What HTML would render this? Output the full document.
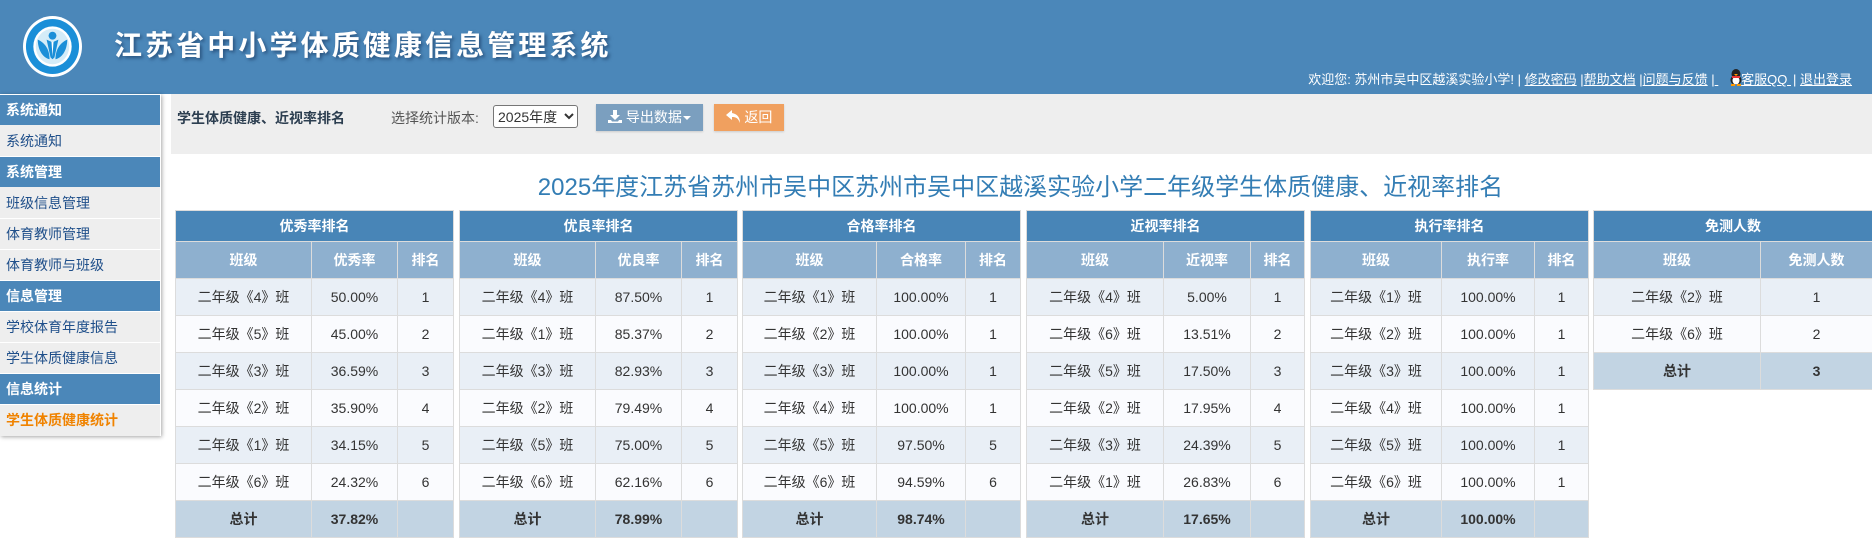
<!DOCTYPE html>
<html lang="zh-CN"><head><meta charset="utf-8"><title>学生体质健康、近视率排名</title>
<style>
*{box-sizing:border-box}
html,body{margin:0;padding:0;width:1872px;height:560px;overflow:hidden;background:#fff;font-family:"Liberation Sans","Noto Sans CJK SC",sans-serif;font-size:14px;color:#333}
#hd{position:absolute;left:0;top:0;width:1872px;height:94px;background:#4b87b9}
#logo{position:absolute;left:23px;top:16px}
#sys{position:absolute;left:114px;top:28px;font-size:28px;line-height:36px;letter-spacing:3.1px;color:#fff;font-weight:700;white-space:nowrap;text-shadow:2px 2px 3px rgba(20,50,90,.6)}
#links{position:absolute;right:20px;top:69px;color:#fff;line-height:20px;white-space:nowrap;font-size:13px}
#links u{text-decoration:underline}
#links svg{vertical-align:-2px}
#side{position:absolute;left:0;top:94px;width:161px;height:342px;background:#fff;border-top:1px solid #fff;border-right:1px solid #fff;box-shadow:1px 1px 4px rgba(0,0,0,.35)}
#side div{position:absolute;left:0;width:160px;height:31px;line-height:30px;padding-left:6px;background:#eee;color:#1f4f8a;white-space:nowrap}
#side div.h{background:#4b87b9;color:#fff;font-weight:bold;height:30px}
#side div.a{color:#f08300;font-weight:bold}
#bar{position:absolute;left:171px;top:94px;width:1701px;height:60px;background:#eee}
#bar b{position:absolute;left:6px;top:14px;line-height:20px;color:#2c3e50;white-space:nowrap}
#lab{position:absolute;left:220px;top:14px;line-height:20px;color:#555;white-space:nowrap}
select{position:absolute;left:322px;top:11px;width:85px;height:23px;font:14px "Liberation Sans","Noto Sans CJK SC",sans-serif;background:#fff;color:#333;border:1px solid #767676;border-radius:3px;padding:0}
.btn{position:absolute;top:10px;height:27px;line-height:27px;color:#fff;text-align:center;box-shadow:0 1px 2px rgba(0,0,0,.15);white-space:nowrap}
#t{position:absolute;left:172px;width:1697px;top:172px;text-align:center;font-size:24px;line-height:32px;color:#337db4;white-space:nowrap}
table{position:absolute;top:210px;table-layout:fixed;border-collapse:collapse;text-align:center;font-size:14px;color:#333}
td,th{border:1px solid #dcdcdc;padding:0}
tr{height:37px}
tr.a{height:31px}
tr.a th{background:#4885b7;color:#fff}
tr.b th{background:#8eb0cf;color:#fff}
tr.o td{background:#e9eff6}
tr.e td{background:#fafbfe}
tr.s td{background:#c2d4e3;font-weight:bold}
</style></head><body>
<div id="hd">
<svg id="logo" width="59" height="61" viewBox="0 0 60 62">
<ellipse cx="30" cy="31" rx="30" ry="31" fill="#fff"/>
<ellipse cx="30" cy="31" rx="27" ry="28" fill="#1b8fd8"/>
<ellipse cx="30" cy="31" rx="19.500" ry="20.500" fill="#fff"/>
<ellipse cx="30" cy="31" rx="17" ry="18" fill="#d4ecf8"/>
<circle cx="30" cy="20" r="4" fill="#1b8fd8"/>
<path d="M24 24L28.500 26L30 28L31.500 26L36 24L32 42L30 44L28 42Z" fill="#1b8fd8"/>
<path d="M29 26.500L30 41L31 26.500Z" fill="#fff"/>
<path d="M15 24C15 33 19 42 27 44C27 36 24 28 15 24Z" fill="#1b8fd8"/>
<path d="M45 24C45 33 41 42 33 44C33 36 36 28 45 24Z" fill="#1b8fd8"/>
</svg>
<div id="sys">江苏省中小学体质健康信息管理系统</div>
<div id="links">欢迎您: 苏州市吴中区越溪实验小学! | <u>修改密码</u> |<u>帮助文档</u> |<u>问题与反馈</u> |<u>&nbsp;</u> &nbsp;&nbsp;<svg width="14" height="17" viewBox="0 0 14 17"><ellipse cx="7" cy="5" rx="4.500" ry="5" fill="#222"/><ellipse cx="7" cy="11" rx="5.500" ry="5" fill="#222"/><ellipse cx="7" cy="11.500" rx="3.500" ry="4" fill="#fff"/><rect x="3" y="7" width="8" height="2" fill="#e33"/><path d="M5 5h4l-2 2z" fill="#f90"/><rect x="2" y="15" width="4" height="2" fill="#f90"/><rect x="8" y="15" width="4" height="2" fill="#f90"/></svg><u style="position:relative;left:-2px">客服QQ </u>| <u>退出登录</u></div>
</div>
<div id="side">
<div class="h" style="top:0">系统通知</div>
<div style="top:30px;line-height:32px">系统通知</div>
<div class="h" style="top:62px">系统管理</div>
<div style="top:92px;line-height:32px">班级信息管理</div>
<div style="top:124px;height:30px">体育教师管理</div>
<div style="top:155px;height:30px">体育教师与班级</div>
<div class="h" style="top:186px">信息管理</div>
<div style="top:217px;height:30px">学校体育年度报告</div>
<div style="top:248px;height:30px">学生体质健康信息</div>
<div class="h" style="top:279px">信息统计</div>
<div class="a" style="top:310px">学生体质健康统计</div>
</div>
<div id="bar">
<b>学生体质健康、近视率排名</b>
<span id="lab">选择统计版本:</span>
<select><option>2025年度</option></select>
<div class="btn" style="left:425px;width:107px;background:#7b9fbf"><svg width="14" height="13" viewBox="0 0 14 13" style="vertical-align:-1px"><path d="M5 0h4v5h3L7 10 2 5h3zM0 10h3l1 1.500h6l1-1.500h3v3H0z" fill="#fff"/></svg> 导出数据<span style="display:inline-block;border:4px solid transparent;border-top-color:#fff;border-bottom:0;vertical-align:2px;margin-left:1px"></span></div>
<div class="btn" style="left:543px;width:70px;background:#f0a05f"><svg width="15" height="13" viewBox="0 0 15 13" style="vertical-align:-1px"><path d="M6 0L0 5l6 5V7c4 0 6 1 8 6 0-6-3-9-8-10z" fill="#fff"/></svg> 返回</div>
</div>
<div id="t">2025年度江苏省苏州市吴中区苏州市吴中区越溪实验小学二年级学生体质健康、近视率排名</div>

<table style="left:175px;width:278px"><colgroup><col style="width:136px"><col style="width:86px"><col style="width:56px"></colgroup>
<tr class="a"><th colspan="3">优秀率排名</th></tr>
<tr class="b"><th>班级</th><th>优秀率</th><th>排名</th></tr>
<tr class="o"><td>二年级《4》班</td><td>50.00%</td><td>1</td></tr>
<tr class="e"><td>二年级《5》班</td><td>45.00%</td><td>2</td></tr>
<tr class="o"><td>二年级《3》班</td><td>36.59%</td><td>3</td></tr>
<tr class="e"><td>二年级《2》班</td><td>35.90%</td><td>4</td></tr>
<tr class="o"><td>二年级《1》班</td><td>34.15%</td><td>5</td></tr>
<tr class="e"><td>二年级《6》班</td><td>24.32%</td><td>6</td></tr>
<tr class="s"><td>总计</td><td>37.82%</td><td></td></tr>
</table>
<table style="left:459px;width:278px"><colgroup><col style="width:136px"><col style="width:86px"><col style="width:56px"></colgroup>
<tr class="a"><th colspan="3">优良率排名</th></tr>
<tr class="b"><th>班级</th><th>优良率</th><th>排名</th></tr>
<tr class="o"><td>二年级《4》班</td><td>87.50%</td><td>1</td></tr>
<tr class="e"><td>二年级《1》班</td><td>85.37%</td><td>2</td></tr>
<tr class="o"><td>二年级《3》班</td><td>82.93%</td><td>3</td></tr>
<tr class="e"><td>二年级《2》班</td><td>79.49%</td><td>4</td></tr>
<tr class="o"><td>二年级《5》班</td><td>75.00%</td><td>5</td></tr>
<tr class="e"><td>二年级《6》班</td><td>62.16%</td><td>6</td></tr>
<tr class="s"><td>总计</td><td>78.99%</td><td></td></tr>
</table>
<table style="left:742px;width:278px"><colgroup><col style="width:134px"><col style="width:89px"><col style="width:55px"></colgroup>
<tr class="a"><th colspan="3">合格率排名</th></tr>
<tr class="b"><th>班级</th><th>合格率</th><th>排名</th></tr>
<tr class="o"><td>二年级《1》班</td><td>100.00%</td><td>1</td></tr>
<tr class="e"><td>二年级《2》班</td><td>100.00%</td><td>1</td></tr>
<tr class="o"><td>二年级《3》班</td><td>100.00%</td><td>1</td></tr>
<tr class="e"><td>二年级《4》班</td><td>100.00%</td><td>1</td></tr>
<tr class="o"><td>二年级《5》班</td><td>97.50%</td><td>5</td></tr>
<tr class="e"><td>二年级《6》班</td><td>94.59%</td><td>6</td></tr>
<tr class="s"><td>总计</td><td>98.74%</td><td></td></tr>
</table>
<table style="left:1026px;width:278px"><colgroup><col style="width:137px"><col style="width:87px"><col style="width:54px"></colgroup>
<tr class="a"><th colspan="3">近视率排名</th></tr>
<tr class="b"><th>班级</th><th>近视率</th><th>排名</th></tr>
<tr class="o"><td>二年级《4》班</td><td>5.00%</td><td>1</td></tr>
<tr class="e"><td>二年级《6》班</td><td>13.51%</td><td>2</td></tr>
<tr class="o"><td>二年级《5》班</td><td>17.50%</td><td>3</td></tr>
<tr class="e"><td>二年级《2》班</td><td>17.95%</td><td>4</td></tr>
<tr class="o"><td>二年级《3》班</td><td>24.39%</td><td>5</td></tr>
<tr class="e"><td>二年级《1》班</td><td>26.83%</td><td>6</td></tr>
<tr class="s"><td>总计</td><td>17.65%</td><td></td></tr>
</table>
<table style="left:1310px;width:278px"><colgroup><col style="width:131px"><col style="width:93px"><col style="width:54px"></colgroup>
<tr class="a"><th colspan="3">执行率排名</th></tr>
<tr class="b"><th>班级</th><th>执行率</th><th>排名</th></tr>
<tr class="o"><td>二年级《1》班</td><td>100.00%</td><td>1</td></tr>
<tr class="e"><td>二年级《2》班</td><td>100.00%</td><td>1</td></tr>
<tr class="o"><td>二年级《3》班</td><td>100.00%</td><td>1</td></tr>
<tr class="e"><td>二年级《4》班</td><td>100.00%</td><td>1</td></tr>
<tr class="o"><td>二年级《5》班</td><td>100.00%</td><td>1</td></tr>
<tr class="e"><td>二年级《6》班</td><td>100.00%</td><td>1</td></tr>
<tr class="s"><td>总计</td><td>100.00%</td><td></td></tr>
</table>
<table style="left:1593px;width:279px"><colgroup><col style="width:167px"><col style="width:112px"></colgroup>
<tr class="a"><th colspan="2">免测人数</th></tr>
<tr class="b"><th>班级</th><th>免测人数</th></tr>
<tr class="o"><td>二年级《2》班</td><td>1</td></tr>
<tr class="e"><td>二年级《6》班</td><td>2</td></tr>
<tr class="s"><td>总计</td><td>3</td></tr>
</table>
</body></html>
